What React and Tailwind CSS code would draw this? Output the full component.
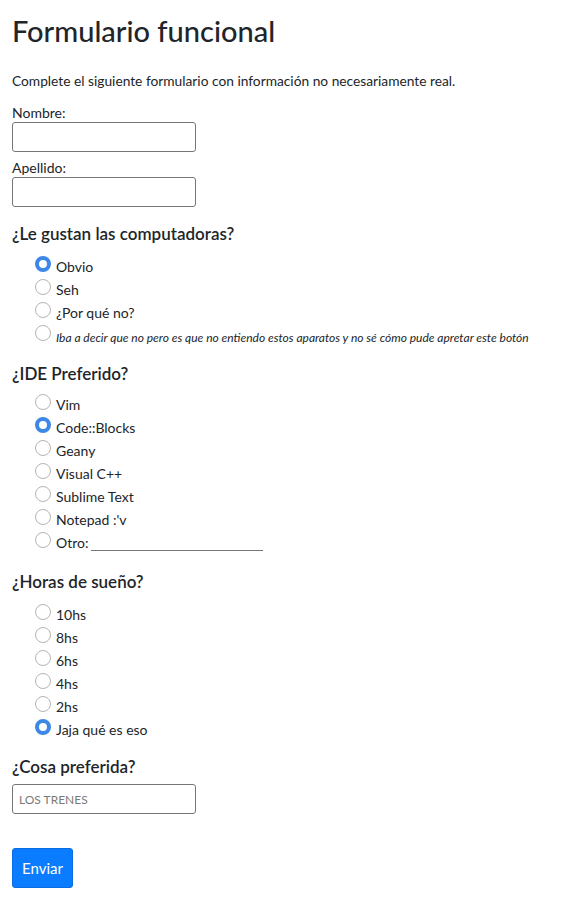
import { useState } from "react";

const Radio = ({ checked, label, italic, children }) => (
  <label className="flex items-start h-[23px]">
    <span
      className={
        checked
          ? "mt-[1px] w-4 h-4 rounded-full border-[4px] border-[#3d87e6] bg-white shrink-0"
          : "mt-[1px] w-4 h-4 rounded-full border border-[#b9b4ae] bg-white shrink-0"
      }
    ></span>
    <span
      className={
        (italic ? "italic text-[12px] mt-[5px] " : "text-sm mt-[3px] ") +
        "ml-[5px] leading-[18px] text-[#212529]"
      }
    >
      {label}
    </span>
    {children}
  </label>
);

const Question = ({ title, tight, children }) => (
  <div>
    <h3
      className={
        (tight ? "mb-[9px] " : "mb-[11px] ") +
        "text-[17px] font-semibold leading-[20px] text-[#212529]"
      }
    >
      {title}
    </h3>
    <div className="pl-[23px] flex flex-col">{children}</div>
  </div>
);

const App = () => {
  const [nombre, setNombre] = useState("");
  const [apellido, setApellido] = useState("");

  return (
    <div
      className="px-3 pt-[13px] bg-white text-[#212529] min-h-[901px]"
      style={{ fontFamily: "Lato, 'Noto Sans', sans-serif" }}
    >
      <h1 className="text-[29px] font-medium leading-[36px]">Formulario funcional</h1>
      <p className="text-[13.75px] mt-[22px] leading-[20px]">
        Complete el siguiente formulario con información no necesariamente real.
      </p>

      <div className="mt-[13px]">
        <label className="block text-sm leading-[18px]">Nombre:</label>
        <input
          value={nombre}
          onChange={(e) => setNombre(e.target.value)}
          className="block w-[184px] h-[30px] border border-[#767676] rounded-[3px] px-2 text-sm outline-none"
        />
      </div>
      <div className="mt-[7px]">
        <label className="block text-sm leading-[18px]">Apellido:</label>
        <input
          value={apellido}
          onChange={(e) => setApellido(e.target.value)}
          className="block w-[184px] h-[30px] border border-[#767676] rounded-[3px] px-2 text-sm outline-none"
        />
      </div>

      <div className="mt-[17px]">
        <Question title="¿Le gustan las computadoras?">
          <Radio checked label="Obvio" />
          <Radio label="Seh" />
          <Radio label="¿Por qué no?" />
          <Radio
            italic
            label="Iba a decir que no pero es que no entiendo estos aparatos y no sé cómo pude apretar este botón"
          />
        </Question>
      </div>

      <div className="mt-[17px]">
        <Question tight title="¿IDE Preferido?">
          <Radio label="Vim" />
          <Radio checked label="Code::Blocks" />
          <Radio label="Geany" />
          <Radio label="Visual C++" />
          <Radio label="Sublime Text" />
          <Radio label="Notepad :'v" />
          <Radio label="Otro:">
            <span className="ml-[3px] mt-[19px] w-[172px] border-b border-[#767676]"></span>
          </Radio>
        </Question>
      </div>

      <div className="mt-[18px]">
        <Question title="¿Horas de sueño?">
          <Radio label="10hs" />
          <Radio label="8hs" />
          <Radio label="6hs" />
          <Radio label="4hs" />
          <Radio label="2hs" />
          <Radio checked label="Jaja qué es eso" />
        </Question>
      </div>

      <div className="mt-[16px]">
        <h3 className="text-[17px] font-semibold leading-[20px] mb-[7px]">¿Cosa preferida?</h3>
        <input
          placeholder="LOS TRENES"
          className="block w-[184px] h-[30px] border border-[#767676] rounded-[3px] px-[6px] text-[12px] placeholder:text-[#7a7a7a] outline-none"
        />
      </div>

      <button className="mt-[34px] h-[40px] px-[9px] bg-[#0a7cff] text-white text-[15px] rounded-[3px] border border-[#0a6de0]">
        Enviar
      </button>
    </div>
  );
};

export default App;
